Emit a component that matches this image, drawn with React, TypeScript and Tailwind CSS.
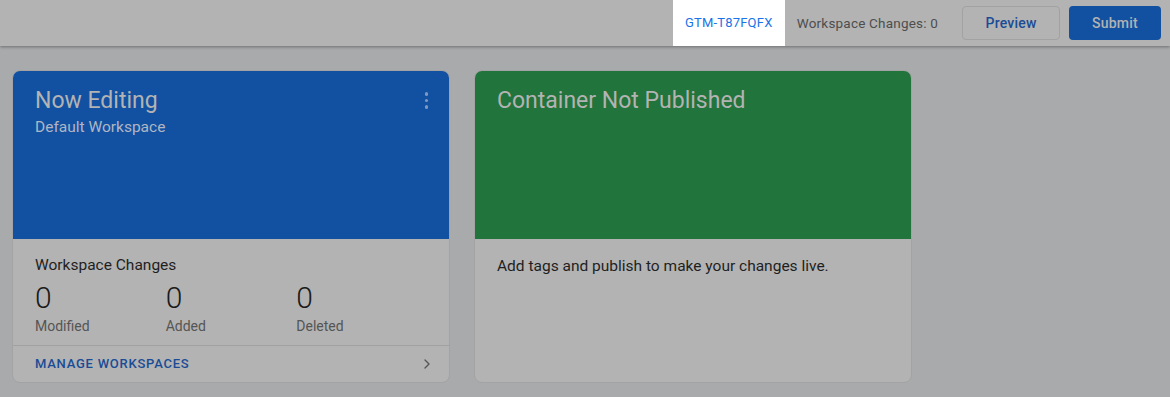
import { ChevronRight } from "lucide-react";

const stats = [
  { label: "Modified", value: 0 },
  { label: "Added", value: 0 },
  { label: "Deleted", value: 0 },
];

export default function App() {
  return (
    <div
      className="h-[397px] w-[1170px] overflow-hidden bg-[#a9aaab]"
      style={{ fontFamily: "Roboto, 'Liberation Sans', sans-serif" }}
    >
      {/* Top bar */}
      <div className="relative z-10 flex h-[46px] items-center justify-end bg-[#b3b3b3] pr-[9px] shadow-[0_1px_3px_rgba(0,0,0,0.35)]">
        <div className="flex h-full w-[112px] items-center justify-center bg-white text-[13px] tracking-[0.2px] text-[#1a73e8]">
          GTM-T87FQFX
        </div>
        <span className="ml-[12px] text-[13.5px] tracking-[0.2px] text-[#4e4e4e]">
          Workspace Changes: 0
        </span>
        <button className="ml-[24px] h-[34px] w-[98px] rounded-[4px] border border-[#a2a2a2] text-[14px] font-medium tracking-[0.2px] text-[#1a4c96]">
          Preview
        </button>
        <button className="ml-[9px] h-[34px] w-[92px] rounded-[4px] bg-[#1251a2] text-[14px] font-medium tracking-[0.2px] text-[#b3b3b3]">
          Submit
        </button>
      </div>

      {/* Cards */}
      <div className="flex gap-[24px] pl-[12px] pt-[24px]">
        {/* Now editing */}
        <div className="flex h-[313px] w-[438px] flex-col overflow-hidden rounded-[8px] border border-[#a3a3a3] bg-[#b3b3b3]">
          <div className="relative h-[168px] shrink-0 bg-[#1251a2] pl-[22px] pt-[15px]">
            <div className="text-[23px] leading-[29px] text-[#b3b3b3]">Now Editing</div>
            <div className="mt-[2px] text-[15.5px] leading-[20px] text-[#b0b6c3]">Default Workspace</div>
            <div className="absolute right-[21px] top-[21px] flex flex-col gap-[3px]">
              <span className="h-[3.5px] w-[3.5px] rounded-full bg-[#7f98c2]" />
              <span className="h-[3.5px] w-[3.5px] rounded-full bg-[#7f98c2]" />
              <span className="h-[3.5px] w-[3.5px] rounded-full bg-[#7f98c2]" />
            </div>
          </div>
          <div className="flex flex-1 flex-col">
            <div className="px-[22px] pt-[16px] pb-[10px]">
              <div className="text-[15.5px] leading-[20px] text-[#1f1f1f]">Workspace Changes</div>
              <div className="mt-[6px] flex">
                {stats.map((s) => (
                  <div key={s.label} className="w-[131px]">
                    <div className="text-[30px] font-light leading-[34px] text-[#1a1a1a]">{s.value}</div>
                    <div className="mt-[2px] text-[14px] leading-[18px] text-[#555]">{s.label}</div>
                  </div>
                ))}
              </div>
            </div>
            <div className="flex flex-1 items-center justify-between border-t border-[#a1a1a1] pl-[22px] pr-[14px]">
              <span className="text-[13px] font-medium tracking-[0.75px] text-[#1a4c96]">
                MANAGE WORKSPACES
              </span>
              <ChevronRight size={16} strokeWidth={2} className="text-[#555]" />
            </div>
          </div>
        </div>

        {/* Container status */}
        <div className="flex h-[313px] w-[438px] flex-col overflow-hidden rounded-[8px] border border-[#a3a3a3] bg-[#b3b3b3]">
          <div className="h-[168px] shrink-0 bg-[#21743b] pl-[22px] pt-[15px]">
            <div className="text-[23px] leading-[29px] text-[#b3b3b3]">Container Not Published</div>
          </div>
          <div className="px-[22px] pt-[17px] text-[15.5px] leading-[20px] text-[#1f1f1f]">
            Add tags and publish to make your changes live.
          </div>
        </div>
      </div>
    </div>
  );
}
